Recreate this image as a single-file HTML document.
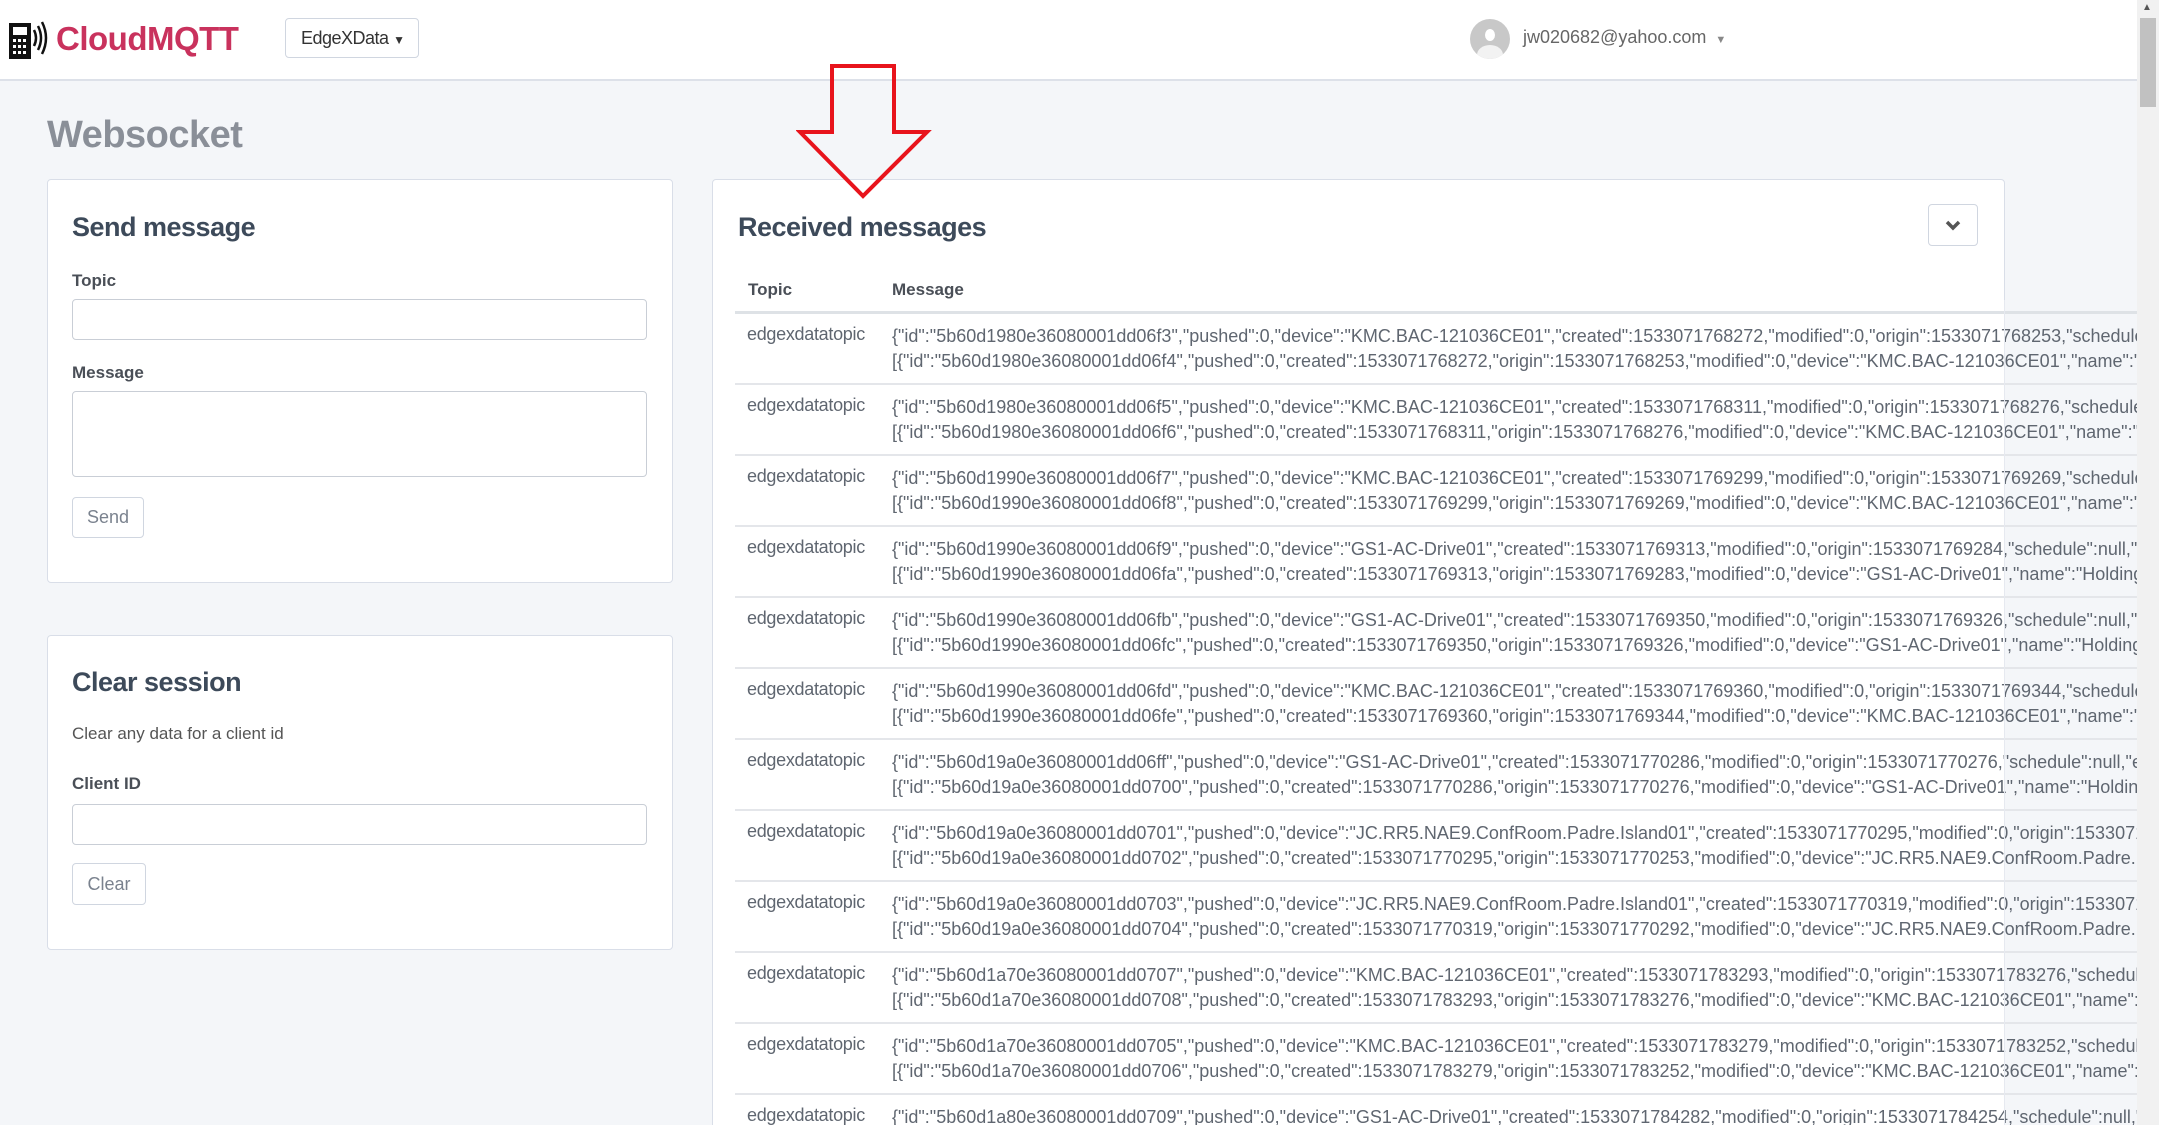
<!DOCTYPE html>
<html><head><meta charset="utf-8"><style>
*{box-sizing:border-box;margin:0;padding:0}
html,body{width:2159px;height:1125px;overflow:hidden}
body{background:#f4f6f9;font-family:"Liberation Sans",sans-serif;position:relative;color:#495057}
.a{position:absolute}
.nav{left:0;top:0;width:2137px;height:81px;background:#fff;border-bottom:2px solid #dde1e9}
.card{background:#fff;border:1px solid #d9dee8;border-radius:4px}
.h{color:#3d4a5a;font-size:27px;font-weight:bold;letter-spacing:-0.5px}
.lbl{color:#4a4f57;font-size:17px;font-weight:bold}
.inp{background:#fff;border:1px solid #c9ced6;border-radius:4px}
.btn{background:#fff;border:1px solid #d0d6e0;border-radius:4px;color:#7a828e;font-size:18px;text-align:center}
.row{left:735px;width:1402px;height:71px;border-bottom:2px solid #e4e6ea;overflow:hidden;white-space:nowrap;font-size:18px;color:#5f6670;letter-spacing:0}
.row .t{position:absolute;left:12px;top:10px;letter-spacing:-0.3px}
.row .m{position:absolute;left:157px;top:10px;line-height:25px}
</style></head><body>
<div class="a nav"></div>
<svg class="a" style="left:8px;top:18px" width="44" height="42" viewBox="0 0 44 42">
<rect x="1" y="5" width="22" height="36" fill="#111"/><rect x="5" y="9" width="14" height="8" fill="#fff"/>
<g fill="#fff"><rect x="5" y="21" width="3" height="3"/><rect x="10" y="21" width="3" height="3"/><rect x="15" y="21" width="3" height="3"/><rect x="5" y="27" width="3" height="3"/><rect x="10" y="27" width="3" height="3"/><rect x="15" y="27" width="3" height="3"/><rect x="5" y="33" width="3" height="3"/><rect x="10" y="33" width="3" height="3"/><rect x="15" y="33" width="3" height="3"/></g>
<path d="M26 12q4 8 0 16M30 8q6 12 0 24M34 4q8 16 0 32" stroke="#111" stroke-width="2.5" fill="none"/></svg>
<div class="a" style="left:56px;top:20px;font-size:33px;font-weight:bold;color:#c9325d;letter-spacing:-0.5px">CloudMQTT</div>
<div class="a btn" style="left:285px;top:18px;width:134px;height:40px;color:#333;line-height:38px;font-size:18px;text-align:left;padding-left:15px;letter-spacing:-0.5px">EdgeXData <span style="font-size:12px">▼</span></div>
<div class="a" style="left:1470px;top:19px;width:40px;height:40px;border-radius:50%;background:#c8c8c8;overflow:hidden"><div class="a" style="left:12px;top:7px;width:16px;height:18px;border-radius:50%;background:#fff;border:3px solid #c8c8c8"></div><div class="a" style="left:7px;top:26px;width:26px;height:20px;border-radius:50% 50% 0 0;background:#f2f2f2"></div></div>
<div class="a" style="left:1523px;top:27px;font-size:18px;color:#666">jw020682@yahoo.com <span style="font-size:11px;color:#888;margin-left:4px">▼</span></div>
<div class="a" style="left:2137px;top:0;width:22px;height:1125px;background:#f1f1f1"></div>
<div class="a" style="left:2140px;top:18px;width:16px;height:89px;background:#c1c1c1"></div>
<div class="a" style="left:2142px;top:2px;font-size:10px;color:#555">▲</div>
<div class="a" style="left:47px;top:114px;font-size:38px;font-weight:bold;color:#8a8f98;letter-spacing:-0.5px">Websocket</div>
<div class="a card" style="left:47px;top:179px;width:626px;height:404px"></div>
<div class="a h" style="left:72px;top:212px">Send message</div>
<div class="a lbl" style="left:72px;top:271px">Topic</div>
<div class="a inp" style="left:72px;top:299px;width:575px;height:41px"></div>
<div class="a lbl" style="left:72px;top:363px">Message</div>
<div class="a inp" style="left:72px;top:391px;width:575px;height:86px"></div>
<div class="a btn" style="left:72px;top:497px;width:72px;height:41px;line-height:39px">Send</div>
<div class="a card" style="left:47px;top:635px;width:626px;height:315px"></div>
<div class="a h" style="left:72px;top:667px">Clear session</div>
<div class="a" style="left:72px;top:724px;font-size:17px;color:#555">Clear any data for a client id</div>
<div class="a lbl" style="left:72px;top:774px">Client ID</div>
<div class="a inp" style="left:72px;top:804px;width:575px;height:41px"></div>
<div class="a btn" style="left:72px;top:863px;width:74px;height:42px;line-height:40px">Clear</div>
<div class="a card" style="left:712px;top:179px;width:1293px;height:1000px"></div>
<div class="a h" style="left:738px;top:212px">Received messages</div>
<div class="a btn" style="left:1928px;top:204px;width:50px;height:42px"><svg width="50" height="42" viewBox="0 0 50 42" style="position:absolute;left:-1px;top:-1px"><path d="M19 18l6 6 6-6" stroke="#555" stroke-width="3.5" fill="none"/></svg></div>
<div class="a" style="left:748px;top:280px;font-size:17px;font-weight:bold;color:#4a4f57">Topic</div>
<div class="a" style="left:892px;top:280px;font-size:17px;font-weight:bold;color:#4a4f57">Message</div>
<div class="a" style="left:735px;top:311px;width:1402px;height:3px;background:#dee2e6"></div>
<div class="a row" style="top:314px"><span class="t">edgexdatatopic</span><span class="m">{"id":"5b60d1980e36080001dd06f3","pushed":0,"device":"KMC.BAC-121036CE01","created":1533071768272,"modified":0,"origin":1533071768253,"schedule":null,"event":null,"readings":<br>[{"id":"5b60d1980e36080001dd06f4","pushed":0,"created":1533071768272,"origin":1533071768253,"modified":0,"device":"KMC.BAC-121036CE01","name":"AnalogValue"}]</span></div>
<div class="a row" style="top:385px"><span class="t">edgexdatatopic</span><span class="m">{"id":"5b60d1980e36080001dd06f5","pushed":0,"device":"KMC.BAC-121036CE01","created":1533071768311,"modified":0,"origin":1533071768276,"schedule":null,"event":null,"readings":<br>[{"id":"5b60d1980e36080001dd06f6","pushed":0,"created":1533071768311,"origin":1533071768276,"modified":0,"device":"KMC.BAC-121036CE01","name":"AnalogValue"}]</span></div>
<div class="a row" style="top:456px"><span class="t">edgexdatatopic</span><span class="m">{"id":"5b60d1990e36080001dd06f7","pushed":0,"device":"KMC.BAC-121036CE01","created":1533071769299,"modified":0,"origin":1533071769269,"schedule":null,"event":null,"readings":<br>[{"id":"5b60d1990e36080001dd06f8","pushed":0,"created":1533071769299,"origin":1533071769269,"modified":0,"device":"KMC.BAC-121036CE01","name":"AnalogValue"}]</span></div>
<div class="a row" style="top:527px"><span class="t">edgexdatatopic</span><span class="m">{"id":"5b60d1990e36080001dd06f9","pushed":0,"device":"GS1-AC-Drive01","created":1533071769313,"modified":0,"origin":1533071769284,"schedule":null,"event":null,"readings":<br>[{"id":"5b60d1990e36080001dd06fa","pushed":0,"created":1533071769313,"origin":1533071769283,"modified":0,"device":"GS1-AC-Drive01","name":"HoldingRegister"}]</span></div>
<div class="a row" style="top:598px"><span class="t">edgexdatatopic</span><span class="m">{"id":"5b60d1990e36080001dd06fb","pushed":0,"device":"GS1-AC-Drive01","created":1533071769350,"modified":0,"origin":1533071769326,"schedule":null,"event":null,"readings":<br>[{"id":"5b60d1990e36080001dd06fc","pushed":0,"created":1533071769350,"origin":1533071769326,"modified":0,"device":"GS1-AC-Drive01","name":"HoldingRegister"}]</span></div>
<div class="a row" style="top:669px"><span class="t">edgexdatatopic</span><span class="m">{"id":"5b60d1990e36080001dd06fd","pushed":0,"device":"KMC.BAC-121036CE01","created":1533071769360,"modified":0,"origin":1533071769344,"schedule":null,"event":null,"readings":<br>[{"id":"5b60d1990e36080001dd06fe","pushed":0,"created":1533071769360,"origin":1533071769344,"modified":0,"device":"KMC.BAC-121036CE01","name":"AnalogValue"}]</span></div>
<div class="a row" style="top:740px"><span class="t">edgexdatatopic</span><span class="m">{"id":"5b60d19a0e36080001dd06ff","pushed":0,"device":"GS1-AC-Drive01","created":1533071770286,"modified":0,"origin":1533071770276,"schedule":null,"event":null,"readings":<br>[{"id":"5b60d19a0e36080001dd0700","pushed":0,"created":1533071770286,"origin":1533071770276,"modified":0,"device":"GS1-AC-Drive01","name":"HoldingRegister"}]</span></div>
<div class="a row" style="top:811px"><span class="t">edgexdatatopic</span><span class="m">{"id":"5b60d19a0e36080001dd0701","pushed":0,"device":"JC.RR5.NAE9.ConfRoom.Padre.Island01","created":1533071770295,"modified":0,"origin":1533071770253,"schedule":null,<br>[{"id":"5b60d19a0e36080001dd0702","pushed":0,"created":1533071770295,"origin":1533071770253,"modified":0,"device":"JC.RR5.NAE9.ConfRoom.Padre.Island01"}]</span></div>
<div class="a row" style="top:882px"><span class="t">edgexdatatopic</span><span class="m">{"id":"5b60d19a0e36080001dd0703","pushed":0,"device":"JC.RR5.NAE9.ConfRoom.Padre.Island01","created":1533071770319,"modified":0,"origin":1533071770292,"schedule":null,<br>[{"id":"5b60d19a0e36080001dd0704","pushed":0,"created":1533071770319,"origin":1533071770292,"modified":0,"device":"JC.RR5.NAE9.ConfRoom.Padre.Island01"}]</span></div>
<div class="a row" style="top:953px"><span class="t">edgexdatatopic</span><span class="m">{"id":"5b60d1a70e36080001dd0707","pushed":0,"device":"KMC.BAC-121036CE01","created":1533071783293,"modified":0,"origin":1533071783276,"schedule":null,"event":null,"readings":<br>[{"id":"5b60d1a70e36080001dd0708","pushed":0,"created":1533071783293,"origin":1533071783276,"modified":0,"device":"KMC.BAC-121036CE01","name":"AnalogValue"}]</span></div>
<div class="a row" style="top:1024px"><span class="t">edgexdatatopic</span><span class="m">{"id":"5b60d1a70e36080001dd0705","pushed":0,"device":"KMC.BAC-121036CE01","created":1533071783279,"modified":0,"origin":1533071783252,"schedule":null,"event":null,"readings":<br>[{"id":"5b60d1a70e36080001dd0706","pushed":0,"created":1533071783279,"origin":1533071783252,"modified":0,"device":"KMC.BAC-121036CE01","name":"AnalogValue"}]</span></div>
<div class="a row" style="top:1095px"><span class="t">edgexdatatopic</span><span class="m">{"id":"5b60d1a80e36080001dd0709","pushed":0,"device":"GS1-AC-Drive01","created":1533071784282,"modified":0,"origin":1533071784254,"schedule":null,"event":null,"readings":</span></div>
<div class="a" style="left:2004px;top:300px;width:1px;height:825px;background:#e6e9f0"></div>
<svg class="a" style="left:796px;top:62px" width="136" height="138" viewBox="0 0 136 138">
<path d="M36 4H98V70H131L67 134L4 70H36Z" fill="none" stroke="#e8141c" stroke-width="4" stroke-linejoin="miter"/></svg>
</body></html>
